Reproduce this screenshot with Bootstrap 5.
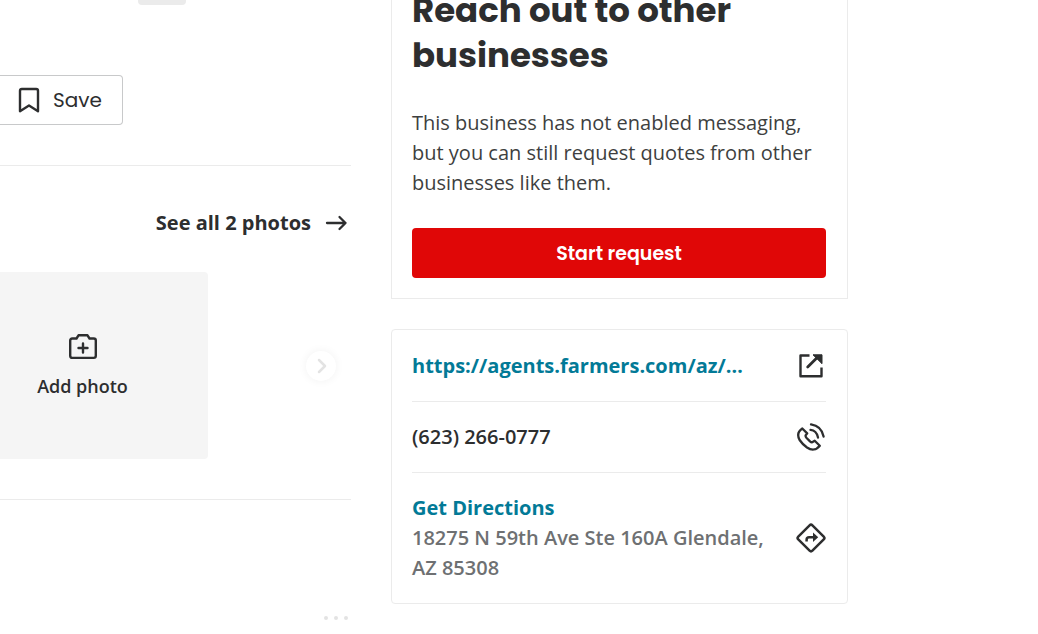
<!DOCTYPE html>
<html lang="en">
<head>
<meta charset="utf-8">
<meta name="viewport" content="width=device-width, initial-scale=1">
<title>Business details</title>
<link rel="stylesheet" href="https://cdn.jsdelivr.net/npm/bootstrap@5.3.0/dist/css/bootstrap.min.css">
<style>
body{font-family:"Open Sans","Noto Sans",sans-serif;font-size:20px;line-height:30px;color:#2d2e2f;overflow-x:hidden}
a{text-decoration:none;color:#027a97}
.biz-page{display:grid;grid-template-columns:minmax(0,351fr) minmax(0,457fr);column-gap:40px;padding-right:190px;overflow:hidden}
.brand-font{font-family:Poppins,"Open Sans",sans-serif}
.line-b{border-bottom:1px solid #ebebeb}
.tab-mark{width:48px;height:5px;margin-left:138px;background:#ebebeb;border-radius:0 0 4px 4px}
.save-area{padding:70px 0 40px}
.save-btn{height:50px;padding:0 20px 0 16px;font-size:20px;line-height:30px;color:#2d2e2f;border:1px solid #c8c9ca;border-left:0;border-radius:0 4px 4px 0;background:#fff;gap:11px}
.see-all{padding-top:42px;padding-bottom:34px;gap:14px;font-weight:700;color:#2d2e2f}
.photo-strip{padding-right:15px;padding-bottom:40px}
.add-photo{width:208px;height:187px;padding:0 43px 0 0;background:#f5f5f5;border:0;border-radius:0 4px 4px 0;font-size:18px;line-height:24px;font-weight:600;color:#2d2e2f;gap:12px}
.next-btn{width:30px;height:30px;padding:0;border:0;background:#fff;box-shadow:0 0 10px rgba(0,0,0,.06)}
.more-dots{padding:116px 3px 0 0;gap:6px}
.more-dots i{width:4px;height:4px;border-radius:50%;background:#e3e3e3}
.quote-box{border:1px solid #ebebeb;border-top:0;padding:0 21px 20px 20px}
.quote-box h2{font-size:34px;line-height:45px;font-weight:700;margin:-12px 0 30px}
.quote-box p{margin:0 0 30px;color:#3e3f40}
.start-btn{height:50px;padding:2px 0 0;border:0;border-radius:4px;background:#e00707;color:#fff;font-size:19px;line-height:30px;font-weight:600}
.start-btn:hover{background:#c40606;color:#fff}
.info-box{margin-top:30px;border:1px solid #ebebeb;border-radius:4px;padding:1px 21px 0 20px}
.info-row{padding:20px 0;gap:20px}
.info-row svg{flex:none}
.addr{color:#6e7072;font-weight:600}
.phone{font-weight:600}
</style>
</head>
<body>
<div class="biz-page">
  <main>
    <div class="tab-mark"></div>
    <div class="save-area line-b">
      <button type="button" class="save-btn brand-font d-flex align-items-center">
        <svg width="26" height="28" viewBox="0 0 26 28" fill="none" stroke="#2d2e2f" stroke-width="2.4" stroke-linejoin="round"><path d="M4 25.2V4.8Q4 3 5.8 3H20.200Q22 3 22 4.800V25.200L13 19.500Z"/></svg>
        <span>Save</span>
      </button>
    </div>
    <section class="line-b">
      <a href="#" class="see-all d-flex justify-content-end align-items-center">
        <span>See all 2 photos</span>
        <svg width="26" height="24" viewBox="0 0 26 24" fill="none" stroke="#2d2e2f" stroke-width="2.300" stroke-linecap="round" stroke-linejoin="round"><path d="M2 12H20.500M14.500 6L20.500 12L14.500 18"/></svg>
      </a>
      <div class="photo-strip d-flex justify-content-between align-items-center">
        <button type="button" class="add-photo d-flex flex-column align-items-center justify-content-center">
          <svg width="28" height="28" viewBox="0 0 28 28" fill="none" stroke="#2d2e2f" stroke-width="2.400" stroke-linecap="round" stroke-linejoin="round"><path d="M3.300 4.500H7.500L9.500 1.300H18.500L20.500 4.500H24.700Q26.800 4.500 26.800 6.600V21.800Q26.800 23.900 24.700 23.900H3.300Q1.200 23.900 1.200 21.800V6.600Q1.200 4.500 3.300 4.500ZM14 9.500V18.500M9.500 14H18.500"/></svg>
          <span>Add photo</span>
        </button>
        <button type="button" class="next-btn rounded-circle d-flex align-items-center justify-content-center" aria-label="Next photo">
          <svg width="16" height="18" viewBox="0 0 16 18" fill="none" stroke="#e3e3e3" stroke-width="2.500" stroke-linecap="round" stroke-linejoin="round"><path d="M6 3L12 9L6 15"/></svg>
        </button>
      </div>
    </section>
    <div class="more-dots d-flex justify-content-end"><i></i><i></i><i></i></div>
  </main>
  <aside>
    <section class="quote-box">
      <h2 class="brand-font">Reach out to other businesses</h2>
      <p>This business has not enabled messaging, but you can still request quotes from other businesses like them.</p>
      <button type="button" class="btn start-btn brand-font w-100">Start request</button>
    </section>
    <section class="info-box">
      <div class="info-row line-b d-flex align-items-center justify-content-between">
        <a href="#" class="fw-bold text-truncate">https://agents.farmers.com/az/…</a>
        <svg width="30" height="30" viewBox="0 0 30 30" fill="none" stroke="#2d2e2f" stroke-width="2.400" stroke-linejoin="round"><path d="M13.500 4.500H4.500V25.300H25.500V16.500"/><path d="M11.700 16L21 6.700" stroke-linecap="round" stroke-width="2.800"/><path d="M17 3.800H26V12.700Z" fill="#2d2e2f" stroke-width="1"/></svg>
      </div>
      <div class="info-row line-b d-flex align-items-center justify-content-between">
        <span class="phone">(623) 266-0777</span>
        <svg width="30" height="30" viewBox="0 0 30 30" fill="none" stroke="#2d2e2f" stroke-width="2.300" stroke-linecap="round" stroke-linejoin="round"><path d="M6.300 6.500L11.200 11.400L9.700 13.300Q9.200 14.400 10.600 16L14 19.400Q15.800 21 17 19.700L18.700 18.700L23.800 23.800C20.500 28.200 15.500 28.500 11 25.500Q6.500 22.300 3.600 18C1.200 13.500 1.800 9.500 6.300 6.500Z"/><path d="M14.500 7.800Q20.500 8.200 22 15.500M15 2.300Q25.500 3.800 27.600 14.500"/></svg>
      </div>
      <div class="info-row d-flex align-items-center justify-content-between">
        <div><a href="#" class="fw-bold">Get Directions</a><div class="addr">18275 N 59th Ave Ste 160A Glendale, AZ 85308</div></div>
        <svg width="30" height="30" viewBox="0 0 30 30"><rect x="5" y="5" width="20" height="20" rx="2" transform="rotate(45 15 15)" fill="none" stroke="#2d2e2f" stroke-width="2.500"/><path d="M10.600 18.500V16.800Q10.600 14.300 13.100 14.300H17.500" fill="none" stroke="#2d2e2f" stroke-width="2.500"/><path d="M17 9.500L22.200 14.300L17 19.100Z" fill="#2d2e2f"/></svg>
      </div>
    </section>
  </aside>
</div>
<script src="https://cdn.jsdelivr.net/npm/bootstrap@5.3.0/dist/js/bootstrap.bundle.min.js"></script>
</body>
</html>
